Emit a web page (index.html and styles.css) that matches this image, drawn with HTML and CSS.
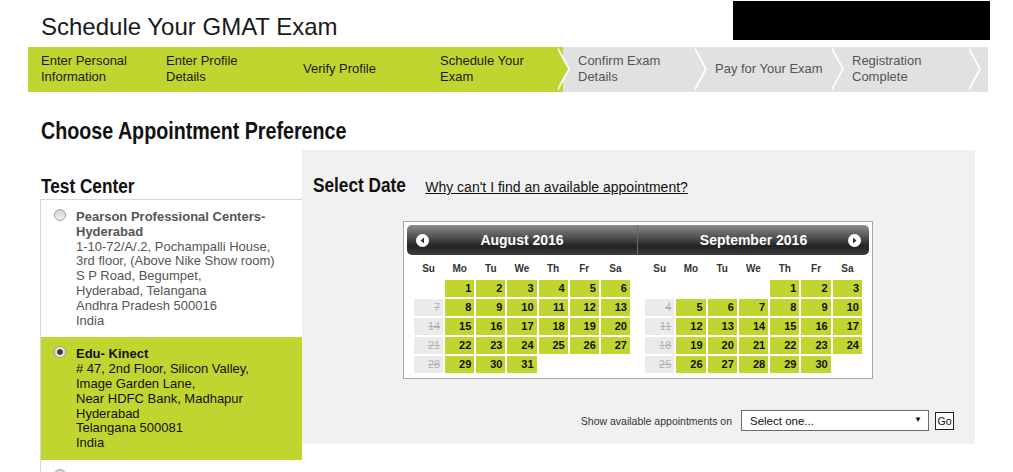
FILE: index.html
```html
<!DOCTYPE html>
<html lang="en">
<head>
    <meta charset="UTF-8">
    <meta name="viewport" content="width=device-width, initial-scale=1.0">
    <title>Schedule Your GMAT Exam</title>
    <link rel="stylesheet" href="styles.css">
</head>
<body>
<div class="page">
    <!-- 页头 -->
    <header class="masthead">
        <h1 class="title">Schedule Your GMAT Exam</h1>
        <div class="account-box"></div>
    </header>

    <!-- 进度条 -->
    <ol class="steps">
        <li class="step done">Enter Personal<br>Information</li>
        <li class="step done">Enter Profile<br>Details</li>
        <li class="step done">Verify Profile</li>
        <li class="step done arrow">Schedule Your<br>Exam</li>
        <li class="step todo arrow">Confirm Exam<br>Details</li>
        <li class="step todo arrow">Pay for Your Exam</li>
        <li class="step todo arrow">Registration<br>Complete</li>
    </ol>

    <h2 class="section-title"><span class="narrow">Choose Appointment Preference</span></h2>

    <div class="booking">
        <!-- 考点列表 -->
        <aside class="centers">
            <h3 class="col-title"><span class="narrow">Test Center</span></h3>
            <ul class="center-list">
                <li class="center">
                    <span class="radio"></span>
                    <div class="center-info">
                        <strong>Pearson Professional Centers-<br>Hyderabad</strong><br>
                        1-10-72/A/.2, Pochampalli House,<br>
                        3rd floor, (Above Nike Show room)<br>
                        S P Road, Begumpet,<br>
                        Hyderabad, Telangana<br>
                        Andhra Pradesh 500016<br>
                        India
                    </div>
                </li>
                <li class="center selected">
                    <span class="radio checked"></span>
                    <div class="center-info">
                        <strong>Edu- Kinect</strong><br>
                        # 47, 2nd Floor, Silicon Valley,<br>
                        Image Garden Lane,<br>
                        Near HDFC Bank, Madhapur<br>
                        Hyderabad<br>
                        Telangana 500081<br>
                        India
                    </div>
                </li>
                <li class="center">
                    <span class="radio"></span>
                    <div class="center-info"></div>
                </li>
            </ul>
        </aside>

        <!-- 日期选择 -->
        <section class="date-panel">
            <div class="panel-head">
                <h3 class="col-title panel-title"><span class="narrow">Select Date</span></h3>
                <a href="#" class="help-link">Why can't I find an available appointment?</a>
            </div>

            <div class="calendar">
                <div class="cal-head">
                    <div class="cal-month">
                        <svg class="cal-nav" width="13" height="13" viewBox="0 0 13 13"><circle cx="6.5" cy="6.5" r="6.5" fill="#fff"/><path d="M8 3.5 L4.5 6.5 L8 9.5 Z" fill="#333"/></svg>
                        <span class="cal-name">August 2016</span>
                        <span></span>
                    </div>
                    <div class="cal-month">
                        <span></span>
                        <span class="cal-name">September 2016</span>
                        <svg class="cal-nav" width="13" height="13" viewBox="0 0 13 13"><circle cx="6.5" cy="6.5" r="6.5" fill="#fff"/><path d="M5 3.5 L8.5 6.5 L5 9.5 Z" fill="#333"/></svg>
                    </div>
                </div>
                <div class="cal-body">
                    <div class="cal-grid">
                        <div class="dow">Su</div><div class="dow">Mo</div><div class="dow">Tu</div><div class="dow">We</div><div class="dow">Th</div><div class="dow">Fr</div><div class="dow">Sa</div>
                        <div></div><div class="day">1</div><div class="day">2</div><div class="day">3</div><div class="day">4</div><div class="day">5</div><div class="day">6</div>
                        <div class="day off">7</div><div class="day">8</div><div class="day">9</div><div class="day">10</div><div class="day">11</div><div class="day">12</div><div class="day">13</div>
                        <div class="day off">14</div><div class="day">15</div><div class="day">16</div><div class="day">17</div><div class="day">18</div><div class="day">19</div><div class="day">20</div>
                        <div class="day off">21</div><div class="day">22</div><div class="day">23</div><div class="day">24</div><div class="day">25</div><div class="day">26</div><div class="day">27</div>
                        <div class="day off">28</div><div class="day">29</div><div class="day">30</div><div class="day">31</div><div></div><div></div><div></div>
                    </div>
                    <div class="cal-grid">
                        <div class="dow">Su</div><div class="dow">Mo</div><div class="dow">Tu</div><div class="dow">We</div><div class="dow">Th</div><div class="dow">Fr</div><div class="dow">Sa</div>
                        <div></div><div></div><div></div><div></div><div class="day">1</div><div class="day">2</div><div class="day">3</div>
                        <div class="day off">4</div><div class="day">5</div><div class="day">6</div><div class="day">7</div><div class="day">8</div><div class="day">9</div><div class="day">10</div>
                        <div class="day off">11</div><div class="day">12</div><div class="day">13</div><div class="day">14</div><div class="day">15</div><div class="day">16</div><div class="day">17</div>
                        <div class="day off">18</div><div class="day">19</div><div class="day">20</div><div class="day">21</div><div class="day">22</div><div class="day">23</div><div class="day">24</div>
                        <div class="day off">25</div><div class="day">26</div><div class="day">27</div><div class="day">28</div><div class="day">29</div><div class="day">30</div><div></div>
                    </div>
                </div>
            </div>

            <div class="date-picker">
                <label class="picker-label" for="dateSelect">Show available appointments on</label>
                <div class="select-wrap">
                    <select id="dateSelect" class="select">
                        <option>Select one...</option>
                    </select>
                    <span class="caret">&#9660;</span>
                </div>
                <button class="go-btn" type="button">Go</button>
            </div>
        </section>
    </div>
</div>
</body>
</html>
```

FILE: styles.css
```css
/* 基础 */
body {
    margin: 0;
    font-family: "Liberation Sans", Arial, sans-serif;
    color: #111;
    background: #fff;
}
.page {
    width: 962px;
    margin-left: 28px;
}

/* 页头 */
.masthead {
    display: flex;
    justify-content: space-between;
    height: 47px;
}
.title {
    margin: 0;
    padding: 12px 0 0 13px;
    font-size: 24px;
    line-height: 30px;
    font-weight: normal;
    color: #1a1a1a;
}
.account-box {
    width: 257px;
    height: 39px;
    margin-top: 1px;
    background: #000;
}

/* 进度条 */
.steps {
    display: flex;
    width: 960px;
    height: 45px;
    margin: 0;
    padding: 0;
    list-style: none;
    background: #e1e1e1;
}
.step {
    position: relative;
    display: flex;
    align-items: center;
    width: 137px;
    padding: 0 0 1px 14px;
    box-sizing: border-box;
    font-size: 13px;
    line-height: 16px;
    white-space: nowrap;
}
.step:first-child {
    width: 124px;
    padding-left: 13px;
}
.step.done {
    background: #c0d52f;
    color: #1a1a1a;
}
.step.todo {
    padding-left: 15px;
    color: #555;
}
/* 箭头 */
.step.arrow::after,
.step.arrow::before {
    content: '';
    position: absolute;
    top: 0;
    width: 0;
    height: 0;
    border-top: 22.5px solid transparent;
    border-bottom: 22.5px solid transparent;
    border-left: 12px solid #e1e1e1;
}
.step.arrow::after {
    right: -5px;
    z-index: 2;
}
.step.arrow::before {
    right: -7px;
    border-left-color: #fff;
    z-index: 1;
}
.step.done.arrow::after {
    border-left-color: #c0d52f;
}

/* 标题：没有窄体字，用横向压缩代替 */
.narrow {
    display: inline-block;
    transform: scaleX(0.82);
    transform-origin: left center;
    white-space: nowrap;
}
.section-title {
    margin: 25px 0 0;
    padding-left: 13px;
    font-size: 24px;
    line-height: 28px;
    font-weight: bold;
    color: #111;
}
.col-title {
    margin: 0;
    font-size: 21px;
    line-height: 24px;
    font-weight: bold;
    color: #111;
}

.booking {
    display: flex;
    align-items: flex-start;
    margin: 5px 0 0 12px;
}

/* 考点列表 */
.centers {
    width: 262px;
    flex-shrink: 0;
}
.centers .col-title {
    margin: 24px 0 1px 1px;
}
.center-list {
    margin: 0;
    padding: 0;
    list-style: none;
    border-top: 1px solid #d6d6d6;
    border-left: 1px solid #d6d6d6;
}
.center {
    display: flex;
    padding: 10px 8px 9px 13px;
    font-size: 13px;
    line-height: 14.8px;
    color: #555;
}
.center.selected {
    background: #c0d52f;
    color: #111;
}
.center-info strong {
    font-weight: bold;
}
.radio {
    width: 12px;
    height: 12px;
    margin: -1px 10px 0 0;
    flex-shrink: 0;
    border: 1px solid #a3a3a3;
    border-radius: 50%;
    box-sizing: border-box;
    background: linear-gradient(#d4d4d4, #f2f2f2);
}
.radio.checked {
    background: radial-gradient(circle, #3a3a3a 0, #3a3a3a 2.5px, #e4e4e4 3.2px, #f4f4f4 100%);
}

/* 日期面板 */
.date-panel {
    width: 673px;
    padding: 23px 21px 13px 11px;
    box-sizing: border-box;
    background: #f1f1f1;
}
.panel-head {
    display: flex;
    align-items: baseline;
}
.panel-title .narrow {
    /* 压缩后少掉的宽度 */
    margin-right: -20px;
}
.help-link {
    margin-left: 19px;
    font-size: 14px;
    color: #111;
    text-decoration: underline;
}

/* 日历 */
.calendar {
    width: 470px;
    margin: 24px 0 0 90px;
    padding: 3px 3px 5px;
    box-sizing: border-box;
    border: 1px solid #a8a8a8;
    background: #fff;
}
.cal-head {
    display: grid;
    grid-template-columns: 230px 232px;
    height: 30px;
    border-radius: 5px;
    overflow: hidden;
    background: linear-gradient(#8d8d8d 0%, #4a4a4a 45%, #232323 70%, #3c3c3c 100%);
}
.cal-month {
    display: grid;
    grid-template-columns: 30px 1fr 30px;
    align-items: center;
    justify-items: center;
}
.cal-month + .cal-month {
    border-left: 1px solid #6a6a6a;
}
.cal-name {
    color: #fff;
    font-size: 14px;
    font-weight: bold;
}
.cal-body {
    display: grid;
    grid-template-columns: 230px 232px;
}
.cal-grid {
    display: grid;
    grid-template-columns: repeat(7, 1fr);
    grid-template-rows: 23px;
    grid-auto-rows: 17px;
    gap: 2px;
    padding: 0 7px;
}
.cal-grid + .cal-grid {
    padding-left: 8px;
}
.dow {
    padding-top: 2px;
    font-size: 10px;
    font-weight: bold;
    line-height: 23px;
    text-align: center;
    color: #333;
}
.day {
    padding-right: 3px;
    background: #c0d52f;
    font-size: 11px;
    font-weight: bold;
    line-height: 17px;
    text-align: right;
    color: #111;
}
.day.off {
    background: #ebebeb;
    color: #b3b3b3;
    font-weight: normal;
    text-decoration: line-through;
}

/* 下拉选择 */
.date-picker {
    display: flex;
    justify-content: flex-end;
    align-items: center;
    margin-top: 31px;
}
.picker-label {
    margin-right: 9px;
    font-size: 10.5px;
    color: #333;
}
.select-wrap {
    position: relative;
    margin-right: 6px;
}
.select {
    display: block;
    width: 188px;
    height: 21px;
    padding: 0 0 0 8px;
    border: 1px solid #6b6b6b;
    border-radius: 0;
    background: #fff;
    font-family: "Liberation Sans", Arial, sans-serif;
    font-size: 11.5px;
    color: #111;
    appearance: none;
    -webkit-appearance: none;
}
.caret {
    position: absolute;
    top: 5px;
    right: 7px;
    font-size: 8px;
    color: #111;
    pointer-events: none;
}
.go-btn {
    width: 19px;
    height: 18px;
    padding: 0;
    border: 1px solid #222;
    background: #fafafa;
    font-family: "Liberation Sans", Arial, sans-serif;
    font-size: 10.5px;
    color: #111;
}
```
